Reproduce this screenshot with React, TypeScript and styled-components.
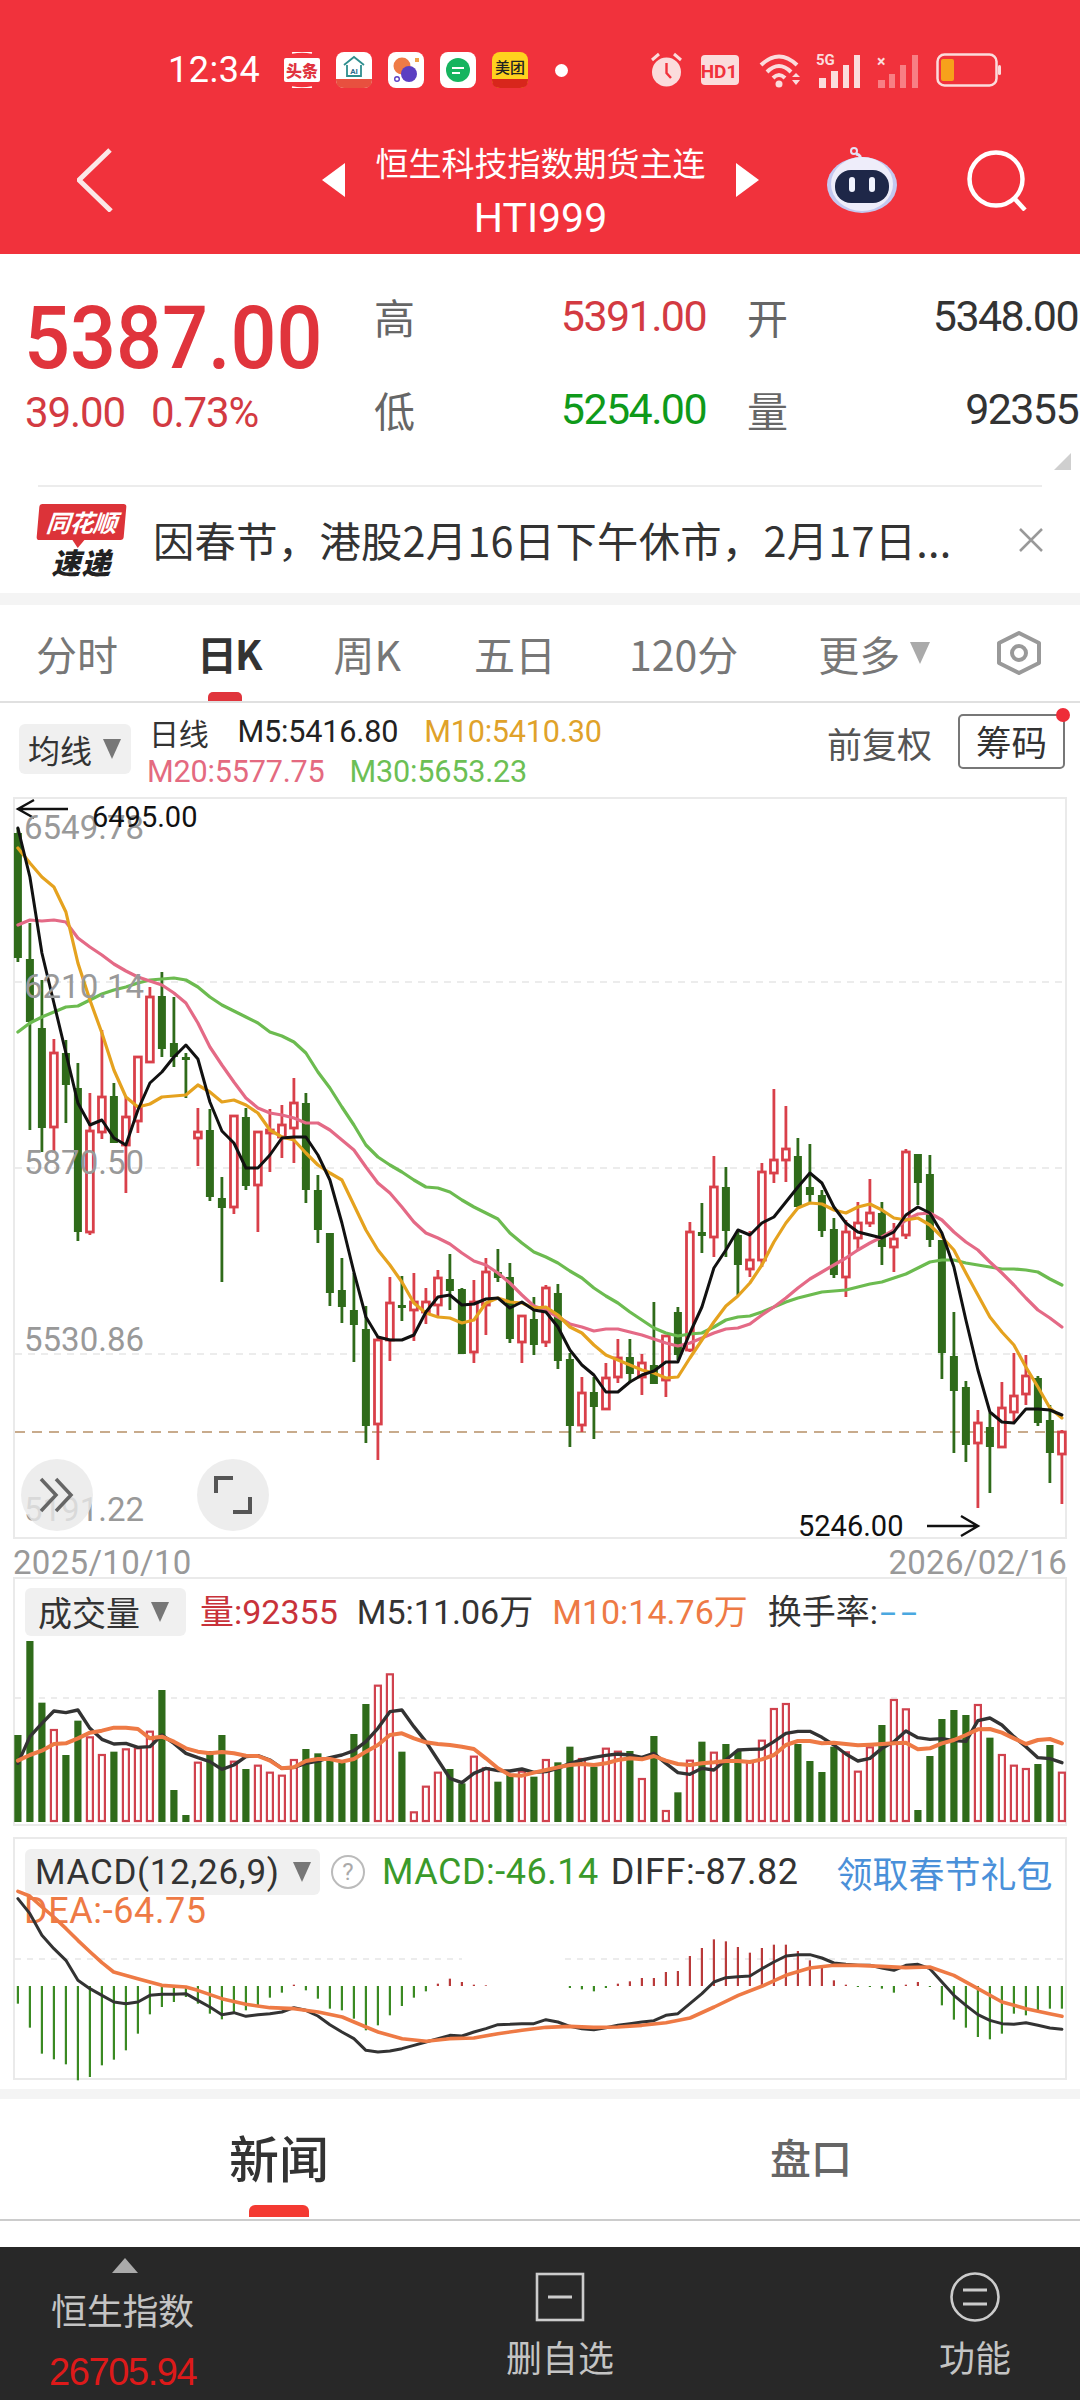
import styled, { createGlobalStyle } from "styled-components";

const CJK = `"Noto Sans CJK SC", sans-serif`;
const NUM = `Roboto, "Noto Sans CJK SC", sans-serif`;

const RED = "#d9404a";
const GREEN = "#2f6b1a";

const GlobalStyle = createGlobalStyle`
    html, body {
        margin: 0;
        padding: 0;
        background: #fff;
    }
    body {
        width: 1080px;
        font-family: ${NUM};
    }
    * {
        box-sizing: border-box;
    }
`;

// [high, bodyTop, bodyBottom, low, colour], all in page pixels
type Candle = [number, number, number, number, "r" | "g"];

const candles: Candle[] = [
    [828, 833, 958, 962, "g"], [923, 959, 1022, 1130, "g"], [980, 1028, 1128, 1152, "g"], [1039, 1053, 1127, 1153, "r"],
    [1040, 1053, 1085, 1123, "g"], [1063, 1088, 1232, 1241, "g"], [1093, 1131, 1232, 1235, "r"], [1030, 1097, 1132, 1139, "r"],
    [1083, 1096, 1143, 1143, "g"], [1097, 1117, 1145, 1193, "r"], [1057, 1057, 1121, 1133, "r"], [987, 997, 1062, 1063, "r"],
    [972, 996, 1049, 1057, "g"], [997, 1043, 1057, 1067, "g"], [1053, 1057, 1058, 1098, "g"], [1108, 1132, 1138, 1166, "r"],
    [1109, 1130, 1197, 1201, "g"], [1177, 1198, 1208, 1282, "g"], [1115, 1116, 1207, 1214, "r"], [1108, 1117, 1186, 1190, "g"],
    [1131, 1132, 1185, 1232, "r"], [1109, 1130, 1133, 1172, "r"], [1105, 1125, 1137, 1158, "r"], [1078, 1103, 1128, 1163, "r"],
    [1093, 1103, 1190, 1203, "g"], [1175, 1190, 1230, 1243, "g"], [1233, 1233, 1293, 1306, "g"], [1258, 1290, 1307, 1323, "g"],
    [1273, 1310, 1325, 1362, "g"], [1306, 1329, 1426, 1443, "g"], [1337, 1340, 1424, 1460, "r"], [1277, 1303, 1340, 1361, "r"],
    [1276, 1305, 1307, 1321, "g"], [1273, 1302, 1310, 1341, "r"], [1288, 1302, 1312, 1324, "r"], [1270, 1278, 1305, 1316, "r"],
    [1254, 1279, 1291, 1310, "g"], [1288, 1289, 1354, 1354, "g"], [1280, 1302, 1352, 1363, "r"], [1258, 1272, 1305, 1335, "r"],
    [1249, 1272, 1278, 1282, "g"], [1263, 1277, 1339, 1343, "g"], [1315, 1316, 1342, 1363, "r"], [1297, 1319, 1345, 1355, "g"],
    [1285, 1288, 1342, 1347, "r"], [1284, 1293, 1361, 1369, "g"], [1353, 1359, 1426, 1447, "g"], [1377, 1393, 1425, 1432, "r"],
    [1377, 1392, 1407, 1439, "g"], [1363, 1378, 1409, 1409, "r"], [1339, 1358, 1377, 1383, "r"], [1339, 1357, 1374, 1383, "g"],
    [1354, 1363, 1377, 1395, "r"], [1302, 1365, 1384, 1384, "g"], [1335, 1336, 1380, 1397, "r"], [1307, 1312, 1355, 1360, "g"],
    [1222, 1232, 1350, 1352, "r"], [1203, 1232, 1236, 1253, "g"], [1156, 1187, 1237, 1257, "r"], [1167, 1187, 1231, 1257, "g"],
    [1230, 1235, 1265, 1295, "g"], [1231, 1260, 1269, 1277, "r"], [1163, 1172, 1260, 1267, "r"], [1089, 1160, 1173, 1183, "r"],
    [1106, 1149, 1160, 1182, "r"], [1138, 1156, 1207, 1207, "g"], [1144, 1187, 1195, 1203, "g"], [1190, 1195, 1231, 1237, "g"],
    [1218, 1229, 1275, 1278, "g"], [1220, 1232, 1277, 1297, "r"], [1202, 1223, 1238, 1250, "r"], [1179, 1213, 1223, 1227, "r"],
    [1202, 1213, 1247, 1265, "g"], [1223, 1239, 1247, 1272, "r"], [1149, 1152, 1235, 1239, "r"], [1154, 1154, 1183, 1205, "g"],
    [1155, 1174, 1240, 1247, "g"], [1240, 1240, 1353, 1379, "g"], [1312, 1356, 1391, 1453, "g"], [1381, 1387, 1445, 1462, "g"],
    [1410, 1423, 1443, 1508, "r"], [1413, 1427, 1447, 1493, "g"], [1382, 1408, 1447, 1447, "r"], [1353, 1396, 1412, 1422, "r"],
    [1355, 1376, 1394, 1405, "r"], [1376, 1378, 1423, 1426, "g"], [1405, 1420, 1453, 1483, "g"], [1430, 1432, 1454, 1504, "r"],
];

const ma5 = [
    828, 877, 953, 1003, 1053, 1103, 1125, 1120, 1138, 1145, 1110, 1083, 1072, 1057, 1045, 1059, 1102, 1131, 1143, 1168, 1168, 1155,
    1138, 1137, 1137, 1155, 1180, 1223, 1272, 1317, 1337, 1340, 1340, 1335, 1312, 1297, 1295, 1305, 1304, 1299, 1298, 1308, 1302, 1310,
    1312, 1327, 1350, 1365, 1375, 1392, 1392, 1382, 1375, 1371, 1362, 1362, 1333, 1307, 1268, 1250, 1230, 1235, 1223, 1217, 1202, 1187,
    1173, 1183, 1207, 1223, 1232, 1235, 1238, 1232, 1215, 1207, 1213, 1233, 1267, 1320, 1370, 1412, 1422, 1423, 1409, 1409, 1410, 1415,
];
const ma10 = [
    848, 863, 877, 887, 912, 963, 1000, 1033, 1070, 1097, 1107, 1104, 1097, 1096, 1095, 1085, 1092, 1102, 1100, 1105, 1113, 1130, 1137,
    1140, 1153, 1165, 1173, 1180, 1205, 1230, 1250, 1265, 1282, 1303, 1313, 1317, 1318, 1323, 1320, 1303, 1298, 1302, 1303, 1308, 1307,
    1315, 1327, 1333, 1345, 1355, 1360, 1365, 1370, 1373, 1378, 1377, 1358, 1340, 1322, 1306, 1296, 1283, 1265, 1242, 1223, 1208, 1203,
    1204, 1210, 1213, 1207, 1204, 1210, 1218, 1220, 1218, 1225, 1237, 1250, 1273, 1295, 1317, 1332, 1345, 1367, 1387, 1408, 1418,
];
const ma20 = [
    925, 920, 921, 920, 922, 938, 947, 955, 964, 971, 977, 981, 985, 993, 1003, 1023, 1047, 1065, 1082, 1098, 1108, 1113, 1115, 1118,
    1123, 1123, 1130, 1140, 1150, 1167, 1183, 1193, 1207, 1222, 1233, 1238, 1244, 1253, 1261, 1265, 1273, 1283, 1295, 1306, 1310, 1317,
    1324, 1327, 1331, 1329, 1329, 1332, 1335, 1339, 1343, 1346, 1343, 1338, 1333, 1329, 1328, 1324, 1315, 1307, 1298, 1288, 1279, 1272,
    1265, 1258, 1250, 1243, 1237, 1230, 1220, 1214, 1213, 1220, 1232, 1242, 1250, 1262, 1273, 1285, 1298, 1310, 1318, 1327,
];
const ma30 = [
    1032, 1023, 1017, 1012, 1007, 1006, 1000, 994, 990, 987, 983, 980, 979, 978, 980, 987, 997, 1005, 1011, 1017, 1023, 1032, 1036,
    1042, 1053, 1072, 1088, 1107, 1125, 1145, 1157, 1165, 1172, 1180, 1187, 1188, 1192, 1200, 1207, 1213, 1219, 1233, 1243, 1252, 1257,
    1263, 1271, 1278, 1288, 1296, 1303, 1312, 1320, 1328, 1333, 1336, 1334, 1333, 1327, 1320, 1317, 1316, 1312, 1307, 1302, 1298, 1295,
    1292, 1291, 1290, 1287, 1284, 1282, 1278, 1274, 1268, 1262, 1260, 1260, 1263, 1265, 1267, 1269, 1269, 1270, 1272, 1279, 1285,
];

// volume panel values are y * 3 above 1630, as measured
const volumes = [
    315, 33, 218, 300, 375, 272, 322, 375, 365, 358, 355, 305, 180, 480, 555, 398, 363, 315, 395, 417, 407, 428, 437, 390, 357, 370,
    385, 398, 312, 222, 167, 133, 365, 547, 470, 428, 417, 460, 380, 415, 455, 432, 425, 440, 390, 397, 350, 387, 410, 356, 365, 363,
    447, 318, 543, 487, 392, 335, 368, 342, 363, 395, 332, 237, 222, 342, 393, 426, 350, 367, 425, 352, 285, 210, 238, 540, 378, 267,
    240, 255, 225, 323, 375, 407, 417, 402, 345, 428,
];
const volMa5 = [
    400, 320, 280, 243, 248, 240, 295, 328, 342, 340, 352, 350, 315, 340, 370, 383, 395, 418, 405, 380, 377, 390, 415, 412, 400, 393,
    383, 375, 362, 335, 295, 245, 240, 290, 335, 390, 445, 458, 430, 415, 422, 423, 417, 427, 425, 415, 400, 390, 382, 376, 372, 375,
    382, 370, 400, 428, 433, 415, 420, 390, 360, 358, 357, 335, 310, 304, 304, 322, 345, 372, 393, 385, 355, 335, 303, 323, 328, 326,
    332, 334, 272, 264, 285, 320, 350, 383, 386, 398,
];
const volMa10 = [
    392, 375, 362, 342, 340, 325, 308, 302, 293, 293, 297, 325, 320, 335, 355, 365, 370, 366, 370, 377, 378, 392, 415, 412, 393, 387,
    387, 395, 387, 365, 345, 315, 310, 325, 337, 342, 345, 350, 357, 385, 415, 435, 437, 428, 420, 412, 405, 402, 405, 400, 390, 385,
    388, 378, 392, 402, 405, 400, 397, 393, 393, 396, 388, 375, 345, 333, 333, 340, 338, 342, 346, 344, 342, 340, 338, 358, 355, 340,
    330, 315, 298, 297, 308, 325, 342, 330, 327, 340,
];

// macd panel values are y * 3 above 1830, zero line at 462
const macd = [
    515, 587, 665, 682, 697, 745, 735, 700, 683, 655, 605, 547, 525, 510, 495, 515, 545, 562, 540, 535, 520, 497, 482, 458, 475, 500,
    530, 535, 560, 595, 580, 550, 522, 497, 478, 455, 440, 450, 458, 460, 462, 462, 462, 462, 462, 462, 468, 472, 478, 468, 455, 448,
    438, 438, 420, 417, 372, 348, 322, 328, 345, 362, 348, 338, 338, 357, 385, 405, 445, 458, 465, 465, 470, 482, 458, 450, 465, 520,
    563, 587, 615, 622, 605, 545, 550, 540, 530, 530,
];
const diff = [
    200, 245, 310, 350, 385, 445, 470, 490, 510, 515, 510, 490, 487, 487, 485, 505, 525, 548, 542, 553, 548, 545, 540, 527, 535, 552,
    578, 600, 620, 655, 660, 657, 650, 640, 630, 620, 610, 612, 600, 590, 578, 577, 575, 575, 563, 570, 583, 590, 593, 587, 580, 575,
    570, 566, 550, 545, 515, 485, 450, 437, 434, 432, 410, 390, 372, 368, 368, 378, 393, 397, 400, 400, 408, 415, 400, 397, 410, 450,
    490, 520, 548, 565, 575, 577, 572, 580, 588, 592,
];
const dea: [number, number][] = [
    [26, 178], [43, 192], [61, 225], [78, 255], [96, 290], [113, 325], [131, 360], [148, 392], [165, 420], [200, 440], [235, 460],
    [270, 465], [287, 475], [322, 500], [357, 517], [392, 527], [427, 530], [462, 540], [497, 555], [514, 570], [549, 600], [584, 620],
    [619, 628], [653, 620], [688, 618], [723, 605], [758, 595], [793, 586], [827, 583], [862, 586], [897, 585], [932, 580], [967, 572],
    [1002, 558], [1037, 525], [1072, 490], [1107, 462], [1141, 430], [1176, 408], [1211, 400], [1245, 400], [1280, 403], [1315, 407],
    [1350, 405], [1385, 430], [1420, 470], [1455, 510], [1490, 530], [1524, 545], [1542, 553],
];

const cx = (i: number) => 17.9 + 12 * i;
const linePoints = (ys: number[], toY = (y: number) => y) => ys.map((y, i) => `${cx(i)},${toY(y)}`).join(" ");
const volY = (v: number) => 1630 + v / 3;
const macdY = (v: number) => 1830 + v / 3;

const Page = styled.div`
    width: 1080px;
    height: 2400px;
    display: flex;
    flex-direction: column;
    background: #fff;
    overflow: hidden;
`;

const Header = styled.header`
    height: 254px;
    background: #f1323c;
    color: #fff;
    display: flex;
    flex-direction: column;
    flex: none;
`;

const StatusBar = styled.div`
    height: 140px;
    padding-left: 168px;
    display: flex;
    align-items: center;
`;

const Clock = styled.span`
    width: 116px;
    font: 400 36px/1 ${NUM};
    letter-spacing: 0.5px;
`;

const AppIcons = styled.div`
    display: flex;
    gap: 16px;
`;

const Dot = styled.i`
    width: 13px;
    height: 13px;
    margin-left: 27px;
    border-radius: 50%;
    background: #fff;
`;

const StatusGlyph = styled.svg<{ $left: number }>`
    margin-left: ${(p) => p.$left}px;
    display: block;
`;

const NavBar = styled.div`
    height: 80px;
    padding-left: 77px;
    display: flex;
    align-items: center;
`;

const NavIcon = styled.svg<{ $left: number }>`
    margin-left: ${(p) => p.$left}px;
    flex: none;
    display: block;
`;

const NavTitle = styled.div`
    width: 329px;
    margin: 20px 0 0 31px;
    display: flex;
    flex-direction: column;
    align-items: center;
`;

const NavName = styled.div`
    height: 56px;
    font: 400 33px/56px ${CJK};
    white-space: nowrap;
`;

const NavCode = styled.div`
    height: 56px;
    font: 400 41px/56px ${NUM};
`;

const Quote = styled.section`
    position: relative;
    height: 231px;
    padding: 15px 0 0 27px;
    display: grid;
    grid-template-columns: 306px 332px 331px;
    grid-template-rows: 94px 93px;
    column-gap: 41px;
    flex: none;
`;

const PriceBlock = styled.div`
    grid-row: 1 / 3;
    padding-top: 19px;
    display: flex;
    flex-direction: column;
`;

const Price = styled.div`
    width: max-content;
    height: 100px;
    margin-left: -3px;
    font: 500 88px/100px ${NUM};
    color: #e0343c;
    transform: scaleX(0.92);
    transform-origin: left center;
    white-space: nowrap;
`;

const Change = styled.div`
    height: 50px;
    margin-left: -2px;
    display: flex;
    gap: 26px;
    font: 400 42px/50px ${NUM};
    letter-spacing: -1.1px;
    color: #d33a42;
    white-space: nowrap;
`;

const Stat = styled.div`
    display: flex;
    align-items: center;
    justify-content: space-between;
`;

const StatLabel = styled.span`
    font: 400 41px/1 ${CJK};
    color: #666;
`;

const StatValue = styled.span<{ $color: string }>`
    font: 400 43px/1 ${NUM};
    letter-spacing: -1.6px;
    color: ${(p) => p.$color};
`;

const QuoteCorner = styled.i`
    position: absolute;
    left: 1054px;
    top: 199px;
    width: 0;
    height: 0;
    border-left: 17px solid transparent;
    border-bottom: 17px solid #cfcfcf;
`;

const NewsDivider = styled.div`
    height: 2px;
    margin: 0 38px;
    background: #ececec;
    flex: none;
`;

const News = styled.section`
    height: 106px;
    padding-left: 38px;
    display: flex;
    align-items: center;
    flex: none;
`;

const NewsLogo = styled.div`
    width: 87px;
    height: 72px;
    display: flex;
    flex-direction: column;
    align-items: center;
    flex: none;
`;

const NewsBubble = styled.div`
    position: relative;
    width: 87px;
    height: 36px;
    background: #dc3339;
    border-radius: 3px;
    transform: skewX(-5deg);
    color: #fff;
    font: italic 700 24px/36px ${CJK};
    letter-spacing: -0.5px;
    text-align: center;
    white-space: nowrap;

    &::after {
        content: "";
        position: absolute;
        left: 36px;
        bottom: -8px;
        border-top: 8px solid #dc3339;
        border-left: 6px solid transparent;
        border-right: 6px solid transparent;
    }
`;

const NewsBrand = styled.div`
    margin-top: 6px;
    font: italic 900 29px/30px ${CJK};
    color: #222;
    letter-spacing: 1px;
`;

const NewsText = styled.div`
    width: 830px;
    margin-left: 28px;
    font: 400 41.3px/1.3 ${CJK};
    letter-spacing: 0.3px;
    color: #333;
    white-space: nowrap;
`;

const NewsClose = styled.svg`
    margin-left: 36px;
    flex: none;
`;

const Band = styled.div<{ $h: number; $top?: number }>`
    height: ${(p) => p.$h}px;
    margin-top: ${(p) => p.$top ?? 0}px;
    background: #f4f4f4;
    flex: none;
`;

const TabBar = styled.nav`
    height: 98px;
    padding: 0 0 0 36px;
    display: flex;
    align-items: center;
    border-bottom: 2px solid #e0e0e0;
    flex: none;
`;

const PeriodTab = styled.span<{ $left: number; $active?: boolean }>`
    position: relative;
    margin-left: ${(p) => p.$left}px;
    font: ${(p) => (p.$active ? "700 40px" : "400 41px")}/1 ${CJK};
    letter-spacing: ${(p) => (p.$active ? -2 : 0)}px;
    color: ${(p) => (p.$active ? "#333" : "#777")};
    white-space: nowrap;
`;

const PeriodMark = styled.i`
    position: absolute;
    left: 11px;
    top: 59px;
    width: 34px;
    height: 9px;
    border-radius: 5px 5px 0 0;
    background: #e0343c;
`;

const Caret = styled.i<{ $w: number; $h: number; $color: string; $left: number }>`
    width: 0;
    height: 0;
    margin-left: ${(p) => p.$left}px;
    border-left: ${(p) => p.$w / 2}px solid transparent;
    border-right: ${(p) => p.$w / 2}px solid transparent;
    border-top: ${(p) => p.$h}px solid ${(p) => p.$color};
    flex: none;
`;

const ChartLegend = styled.div`
    height: 94px;
    padding-left: 19px;
    display: flex;
    align-items: flex-start;
    flex: none;
`;

const Pill = styled.div<{ $w: number; $h: number; $pad: number; $size: number; $top?: number }>`
    width: ${(p) => p.$w}px;
    height: ${(p) => p.$h}px;
    margin-top: ${(p) => p.$top ?? 0}px;
    padding-left: ${(p) => p.$pad}px;
    border-radius: 6px;
    background: #f0f0f0;
    display: flex;
    align-items: center;
    font: 400 ${(p) => p.$size}px/1 ${CJK};
    color: #333;
    white-space: nowrap;
    flex: none;
`;

const MacdPill = styled(Pill)`
    font-family: ${NUM};
    letter-spacing: 0.7px;
`;

const LegendRows = styled.div`
    margin-left: 18px;
    padding-top: 11px;
    width: 650px;
    display: flex;
    flex-direction: column;
    gap: 4px;
`;

const LegendRow = styled.div`
    height: 36px;
    display: flex;
    align-items: center;
`;

const LegendItem = styled.span<{ $color: string; $left?: number }>`
    margin-left: ${(p) => p.$left ?? 0}px;
    font: 400 30.6px/1 ${NUM};
    letter-spacing: -0.2px;
    color: ${(p) => p.$color};
    white-space: nowrap;
`;

const LegendName = styled(LegendItem)`
    font: 400 30px/1 ${CJK};
`;

const AdjustLabel = styled.span`
    margin: 22px 0 0 28px;
    font: 400 35px/1 ${CJK};
    color: #555;
    white-space: nowrap;
`;

const ChipButton = styled.div`
    position: relative;
    width: 107px;
    height: 55px;
    margin: 11px 0 0 26px;
    border: 2px solid #777;
    border-radius: 5px;
    font: 400 35.5px/50px ${CJK};
    color: #333;
    text-align: center;
`;

const ChipDot = styled.i`
    position: absolute;
    right: -7px;
    top: -8px;
    width: 14px;
    height: 14px;
    border-radius: 50%;
    background: #ee2c38;
`;

const ChartFrame = styled.div`
    position: relative;
    width: 1054px;
    height: 742px;
    margin-left: 13px;
    border: 2px solid #eaeaea;
    flex: none;
`;

const ChartSvg = styled.svg`
    display: block;
    overflow: visible;
`;

const AxisLabel = styled.span<{ $center: number }>`
    position: absolute;
    left: 9px;
    top: ${(p) => p.$center - 799 - 20}px;
    font: 400 33px/40px ${NUM};
    color: #999;
`;

const PeakLabel = styled.span<{ $left: number; $center: number }>`
    position: absolute;
    left: ${(p) => p.$left}px;
    top: ${(p) => p.$center - 799 - 18}px;
    font: 400 29px/36px ${NUM};
    color: #111;
`;

const RoundButton = styled.div<{ $left: number }>`
    position: absolute;
    left: ${(p) => p.$left}px;
    top: 660px;
    width: 72px;
    height: 72px;
    border-radius: 50%;
    background: rgba(232, 232, 232, 0.8);
    display: flex;
    align-items: center;
    justify-content: center;
`;

const DateRow = styled.div`
    height: 38px;
    padding: 8px 13px 0;
    display: flex;
    align-items: center;
    justify-content: space-between;
    font: 400 33px/1 ${NUM};
    letter-spacing: 0.3px;
    color: #999;
    flex: none;
`;

const Panel = styled.div<{ $h: number; $top?: number }>`
    position: relative;
    width: 1054px;
    height: ${(p) => p.$h}px;
    margin: ${(p) => p.$top ?? 0}px 0 0 13px;
    border: 2px solid #eaeaea;
    flex: none;
`;

const PanelHead = styled.div`
    height: 61px;
    padding: 9px 0 0 10px;
    display: flex;
    align-items: flex-start;
`;

const MacdHead = styled(PanelHead)`
    height: 52px;
    padding-top: 10px;
`;

const PanelValue = styled.span<{ $color: string; $left: number }>`
    height: 48px;
    margin-left: ${(p) => p.$left}px;
    font: 400 34px/48px ${NUM}, ${CJK};
    color: ${(p) => p.$color};
    white-space: nowrap;
`;

const MacdValue = styled(PanelValue)`
    font-size: 36px;
    line-height: 46px;
    letter-spacing: 0.5px;
`;

const GiftLink = styled(PanelValue)`
    font: 400 36px/46px ${CJK};
`;

const NoRate = styled.span`
    display: inline-block;
    margin-left: 2px;
    color: #4aa8e0;
    letter-spacing: 3px;
    transform: scaleX(1.7);
    transform-origin: left center;
`;

const MacdLayer = styled.svg`
    position: absolute;
    left: 0;
    top: 0;
    overflow: visible;
`;

const DeaLabel = styled.div`
    margin-left: 9px;
    font: 400 36px/40px ${NUM};
    letter-spacing: 0.6px;
    color: #ee7a45;
`;

const HelpMark = styled.span`
    width: 34px;
    height: 34px;
    margin: 6px 0 0 11px;
    border: 2px solid #bbb;
    border-radius: 50%;
    font: 400 24px/30px ${NUM};
    color: #aaa;
    text-align: center;
    flex: none;
`;

const NewsTabs = styled.nav`
    height: 122px;
    border-bottom: 2px solid #ccc;
    display: flex;
    align-items: center;
    flex: none;
`;

const NewsTab = styled.span<{ $left: number; $active?: boolean }>`
    position: relative;
    margin-left: ${(p) => p.$left}px;
    margin-top: -6px;
    font: 500 ${(p) => (p.$active ? 50 : 41)}px/1 ${CJK};
    color: ${(p) => (p.$active ? "#333" : "#666")};
    white-space: nowrap;
`;

const NewsMark = styled.i`
    position: absolute;
    left: 20px;
    top: 74px;
    width: 60px;
    height: 12px;
    border-radius: 6px 6px 0 0;
    background: #f43a32;
`;

const Spacer = styled.div`
    flex: 1;
`;

const BottomBar = styled.footer`
    height: 153px;
    background: #282828;
    position: relative;
    display: flex;
    color: #c4c4c4;
    flex: none;
`;

const IndexCell = styled.div`
    width: 500px;
    padding: 11px 0 0 51px;
    display: flex;
    flex-direction: column;
    align-items: flex-start;
`;

const IndexArrow = styled.i`
    width: 0;
    height: 0;
    margin-left: 61px;
    border-left: 13px solid transparent;
    border-right: 13px solid transparent;
    border-bottom: 15px solid #aaa;
`;

const IndexName = styled.div`
    margin-top: 11px;
    font: 400 36px/50px ${CJK};
    letter-spacing: -0.3px;
    white-space: nowrap;
`;

const IndexValue = styled.div`
    margin-top: 15px;
    margin-left: -2px;
    font: 400 38px/46px "Liberation Sans", ${NUM};
    letter-spacing: -1.4px;
    color: #dd1a1a;
`;

const ActionCell = styled.div<{ $w: number; $left: number }>`
    width: ${(p) => p.$w}px;
    margin-left: ${(p) => p.$left}px;
    padding-top: 25px;
    display: flex;
    flex-direction: column;
    align-items: center;
    gap: 11px;
    font: 400 36px/46px ${CJK};
    white-space: nowrap;
`;

const ChartCandles = () => (
    <>
        {candles.map(([hi, top, bot, lo, c], i) => {
            const x = cx(i);
            const color = c === "r" ? RED : GREEN;
            return (
                <g key={i}>
                    <line x1={x} x2={x} y1={hi} y2={top} stroke={color} strokeWidth={2.8} />
                    <line x1={x} x2={x} y1={bot} y2={lo} stroke={color} strokeWidth={2.8} />
                    {c === "r" ? (
                        <rect x={x - 3.4} y={top} width={6.8} height={Math.max(bot - top, 3)} fill="#fff" stroke={color} strokeWidth={2.8} />
                    ) : (
                        <rect x={x - 4} y={top} width={8} height={Math.max(bot - top, 3)} fill={color} />
                    )}
                </g>
            );
        })}
    </>
);

const TrendLine = ({ points, color, width }: { points: string; color: string; width: number }) => (
    <polyline points={points} fill="none" stroke={color} strokeWidth={width} strokeLinejoin="round" strokeLinecap="round" />
);

const App = () => (
    <Page>
        <GlobalStyle />
        <Header>
            <StatusBar>
                <Clock>12:34</Clock>
                <AppIcons>
                    <svg width="36" height="36" viewBox="0 0 36 36">
                        <path d="M8 1 Q18 -1 28 1 M8 35 Q18 37 28 35" stroke="#fff" strokeWidth="1.6" fill="none" />
                        <rect x="0" y="6" width="36" height="24" fill="#fff" rx="2" />
                        <text x="18" y="25" textAnchor="middle" fontSize="16" fontWeight="900" fill="#e03440" fontFamily={CJK}>头条</text>
                    </svg>
                    <svg width="36" height="36" viewBox="0 0 36 36">
                        <rect width="36" height="36" rx="8" fill="#fff" />
                        <path d="M8 13 L18 5 L28 13 M11 13 V24 H25 V13" fill="none" stroke="#2e8e8e" strokeWidth="1.8" />
                        <text x="18" y="22" textAnchor="middle" fontSize="8" fontWeight="700" fill="#2e6e8e" fontFamily={NUM}>AI</text>
                        <path d="M0 27 H36 V28 Q36 36 28 36 H8 Q0 36 0 28 Z" fill="#e8503f" />
                    </svg>
                    <svg width="36" height="36" viewBox="0 0 36 36">
                        <rect width="36" height="36" rx="8" fill="#fff" />
                        <circle cx="14" cy="14" r="8.5" fill="#ef7b45" />
                        <circle cx="21" cy="22" r="8" fill="#5b3fc2" />
                        <rect x="27" y="6" width="4" height="4" fill="#f0a24a" />
                        <circle cx="9" cy="27" r="2.3" fill="none" stroke="#5b3fc2" strokeWidth="1.4" />
                    </svg>
                    <svg width="36" height="36" viewBox="0 0 36 36">
                        <rect width="36" height="36" rx="8" fill="#fff" />
                        <circle cx="18" cy="18" r="12" fill="#16b45f" />
                        <path d="M12 16 H24 M12 21 H20" stroke="#fff" strokeWidth="2.2" />
                    </svg>
                    <svg width="36" height="36" viewBox="0 0 36 36">
                        <rect width="36" height="36" rx="8" fill="#ffd21e" />
                        <path d="M0 27 H36 V28 Q36 36 28 36 H8 Q0 36 0 28 Z" fill="#d8261c" />
                        <text x="18" y="21" textAnchor="middle" fontSize="15" fontWeight="500" fill="#222" fontFamily={CJK}>美团</text>
                    </svg>
                </AppIcons>
                <Dot />
                <StatusGlyph $left={82} width="33" height="36" viewBox="0 0 33 36">
                    <circle cx="16.5" cy="20" r="14.5" fill="#fbdcdc" />
                    <path d="M16.5 11 V21 L21 26" fill="none" stroke="#f1323c" strokeWidth="2.4" />
                    <path d="M2 8 L9 2 M31 8 L24 2" stroke="#fbdcdc" strokeWidth="3" />
                </StatusGlyph>
                <StatusGlyph $left={18} width="38" height="30" viewBox="0 0 38 30">
                    <rect width="38" height="30" rx="4" fill="#fbdcdc" />
                    <text x="18" y="23" textAnchor="middle" fontSize="19" fontWeight="700" fill="#f1323c" fontFamily={NUM}>HD1</text>
                </StatusGlyph>
                <StatusGlyph $left={20} width="42" height="36" viewBox="0 0 42 36">
                    <path d="M2 13 Q20 -4 38 13 M8 20 Q20 8 32 20 M14 26 Q20 20 26 26" fill="none" stroke="#fbdcdc" strokeWidth="4" />
                    <circle cx="20" cy="32" r="3.5" fill="#fbdcdc" />
                    <path d="M33 25 L37 21 L41 25 Z M33 28 H41 L37 33 Z" fill="#fbdcdc" />
                </StatusGlyph>
                <StatusGlyph $left={15} width="45" height="36" viewBox="0 0 45 36">
                    <text x="0" y="13" fontSize="15" fontWeight="700" fill="#fbdcdc" fontFamily={NUM}>5G</text>
                    <path d="M3 26 H10 V36 H3 Z M15 19 H22 V36 H15 Z M27 13 H33 V36 H27 Z M38 3 H44 V36 H38 Z" fill="#fbdcdc" />
                </StatusGlyph>
                <StatusGlyph $left={16} width="43" height="36" viewBox="0 0 43 36">
                    <text x="0" y="15" fontSize="16" fontWeight="700" fill="#fbdcdc" fontFamily={NUM}>×</text>
                    <path d="M1 28 H8 V36 H1 Z M12 22 H18 V36 H12 Z M23 13 H29 V36 H23 Z M35 3 H41 V36 H35 Z" fill="#f87f84" />
                </StatusGlyph>
                <StatusGlyph $left={16} width="66" height="34" viewBox="0 0 66 34">
                    <rect x="1.5" y="1.5" width="59" height="31" rx="7" fill="none" stroke="#fbdcdc" strokeWidth="2.5" />
                    <rect x="5" y="6" width="13" height="22" rx="2" fill="#f7a11b" />
                    <rect x="62" y="12" width="3" height="10" rx="1.5" fill="#fbdcdc" />
                </StatusGlyph>
            </StatusBar>
            <NavBar>
                <NavIcon $left={0} width="36" height="64" viewBox="0 0 36 64">
                    <path d="M33 2 L2 32 L34 63" fill="none" stroke="#fbe8e8" strokeWidth="5" />
                </NavIcon>
                <NavIcon $left={209} width="23" height="34" viewBox="0 0 23 34">
                    <path d="M23 0 V34 L0 17 Z" fill="#fff" />
                </NavIcon>
                <NavTitle>
                    <NavName>恒生科技指数期货主连</NavName>
                    <NavCode>HTI999</NavCode>
                </NavTitle>
                <NavIcon $left={31} width="23" height="34" viewBox="0 0 23 34">
                    <path d="M0 0 V34 L23 17 Z" fill="#fff" />
                </NavIcon>
                <NavIcon $left={67} width="72" height="66" viewBox="0 0 72 66">
                    <circle cx="28" cy="4" r="3" fill="none" stroke="#e4e2f4" strokeWidth="2" />
                    <path d="M30 7 Q36 8 34 14" fill="none" stroke="#e4e2f4" strokeWidth="3" />
                    <ellipse cx="36" cy="38" rx="35" ry="28" fill="#c3c8f0" />
                    <ellipse cx="36" cy="37" rx="31" ry="27" fill="#eeedfa" />
                    <rect x="9" y="23" width="54" height="33" rx="16" fill="#1e2748" />
                    <rect x="23" y="30" width="6" height="15" rx="3" fill="#f1f3ff" />
                    <rect x="43" y="30" width="6" height="15" rx="3" fill="#f1f3ff" />
                </NavIcon>
                <NavIcon $left={69} width="60" height="62" viewBox="0 0 60 62">
                    <circle cx="29" cy="30" r="26.5" fill="none" stroke="#fff" strokeWidth="4.5" />
                    <path d="M47 49 L58 61" stroke="#fff" strokeWidth="4.5" />
                </NavIcon>
            </NavBar>
        </Header>

        <Quote>
            <PriceBlock>
                <Price>5387.00</Price>
                <Change>
                    <span>39.00</span>
                    <span>0.73%</span>
                </Change>
            </PriceBlock>
            <Stat>
                <StatLabel>高</StatLabel>
                <StatValue $color="#d33a42">5391.00</StatValue>
            </Stat>
            <Stat>
                <StatLabel>开</StatLabel>
                <StatValue $color="#333">5348.00</StatValue>
            </Stat>
            <Stat>
                <StatLabel>低</StatLabel>
                <StatValue $color="#0f9a1a">5254.00</StatValue>
            </Stat>
            <Stat>
                <StatLabel>量</StatLabel>
                <StatValue $color="#333">92355</StatValue>
            </Stat>
            <QuoteCorner />
        </Quote>
        <NewsDivider />
        <News>
            <NewsLogo>
                <NewsBubble>同花顺</NewsBubble>
                <NewsBrand>速递</NewsBrand>
            </NewsLogo>
            <NewsText>因春节，港股2月16日下午休市，2月17日...</NewsText>
            <NewsClose width="24" height="24" viewBox="0 0 24 24">
                <path d="M1 1 L23 23 M23 1 L1 23" stroke="#999" strokeWidth="2.5" />
            </NewsClose>
        </News>
        <Band $h={12} />

        <TabBar>
            <PeriodTab $left={0}>分时</PeriodTab>
            <PeriodTab $left={79} $active>
                日K
                <PeriodMark />
            </PeriodTab>
            <PeriodTab $left={73}>周K</PeriodTab>
            <PeriodTab $left={73}>五日</PeriodTab>
            <PeriodTab $left={73}>120分</PeriodTab>
            <PeriodTab $left={80}>更多</PeriodTab>
            <Caret $w={21} $h={22} $color="#aaa" $left={10} />
            <NavIcon $left={66} width="46" height="44" viewBox="0 0 46 44">
                <path d="M23 2 L43 12 V32 L23 42 L3 32 V12 Z" fill="none" stroke="#999" strokeWidth="4" strokeLinejoin="round" />
                <circle cx="23" cy="22" r="7" fill="none" stroke="#999" strokeWidth="4" />
            </NavIcon>
        </TabBar>

        <ChartLegend>
            <Pill $w={112} $h={50} $pad={9} $size={32} $top={21}>
                均线
                <Caret $w={18} $h={20} $color="#777" $left={11} />
            </Pill>
            <LegendRows>
                <LegendRow>
                    <LegendName $color="#333">日线</LegendName>
                    <LegendItem $color="#222" $left={29}>M5:5416.80</LegendItem>
                    <LegendItem $color="#e0a22a" $left={26}>M10:5410.30</LegendItem>
                </LegendRow>
                <LegendRow>
                    <LegendItem $color="#e46a80" $left={-2}>M20:5577.75</LegendItem>
                    <LegendItem $color="#6cbf55" $left={25}>M30:5653.23</LegendItem>
                </LegendRow>
            </LegendRows>
            <AdjustLabel>前复权</AdjustLabel>
            <ChipButton>
                筹码
                <ChipDot />
            </ChipButton>
        </ChartLegend>

        <ChartFrame>
            <ChartSvg width="1050" height="738" viewBox="15 799 1050 738">
                {[982, 1168, 1354].map((y) => (
                    <line key={y} x1="15" x2="1065" y1={y} y2={y} stroke="#e6e6e6" strokeWidth="1.5" strokeDasharray="7 6" />
                ))}
                <line x1="15" x2="1065" y1="1432" y2="1432" stroke="#c8ab8c" strokeWidth="2" strokeDasharray="10 7" />
                <ChartCandles />
                <TrendLine points={linePoints(ma30)} color="#6cbb50" width={3.2} />
                <TrendLine points={linePoints(ma20)} color="#e46a86" width={3.2} />
                <TrendLine points={linePoints(ma10)} color="#e5a21f" width={3.2} />
                <TrendLine points={linePoints(ma5)} color="#111" width={3} />
                <path d="M18 809 H68 M34 800 L18 809 L34 818" fill="none" stroke="#111" strokeWidth="2.4" />
                <path d="M927 1526 H978 M961 1516 L978 1526 L961 1536" fill="none" stroke="#111" strokeWidth="2.4" />
            </ChartSvg>
            <AxisLabel $center={828}>6549.78</AxisLabel>
            <AxisLabel $center={987}>6210.14</AxisLabel>
            <AxisLabel $center={1163}>5870.50</AxisLabel>
            <AxisLabel $center={1340}>5530.86</AxisLabel>
            <AxisLabel $center={1510}>5191.22</AxisLabel>
            <PeakLabel $left={77} $center={817}>6495.00</PeakLabel>
            <PeakLabel $left={783} $center={1526}>5246.00</PeakLabel>
            <RoundButton $left={6}>
                <svg width="36" height="36" viewBox="0 0 36 36">
                    <path d="M2 2 L17 18 L2 34 M17 2 L32 18 L17 34" fill="none" stroke="#666" strokeWidth="3.5" />
                </svg>
            </RoundButton>
            <RoundButton $left={182}>
                <svg width="38" height="38" viewBox="0 0 38 38">
                    <path d="M2 17 V2 H19 M36 21 V36 H19" fill="none" stroke="#555" strokeWidth="4" />
                </svg>
            </RoundButton>
        </ChartFrame>

        <DateRow>
            <span>2025/10/10</span>
            <span>2026/02/16</span>
        </DateRow>

        <Panel $h={249}>
            <PanelHead>
                <Pill $w={161} $h={48} $pad={13} $size={34}>
                    成交量
                    <Caret $w={18} $h={20} $color="#777" $left={11} />
                </Pill>
                <PanelValue $color="#c8323a" $left={14}>量:92355</PanelValue>
                <PanelValue $color="#333" $left={19}>M5:11.06万</PanelValue>
                <PanelValue $color="#ee7a45" $left={19}>M10:14.76万</PanelValue>
                <PanelValue $color="#333" $left={20}>
                    换手率:<NoRate>--</NoRate>
                </PanelValue>
            </PanelHead>
            <ChartSvg width="1050" height="184" viewBox="15 1640 1050 184">
                <line x1="15" x2="1065" y1="1698" y2="1698" stroke="#e6e6e6" strokeWidth="1.5" strokeDasharray="6 6" />
                {volumes.map((v, i) => {
                    const top = volY(v);
                    return candles[i][4] === "r" ? (
                        <rect key={i} x={cx(i) - 3} y={top} width={6} height={1821 - top} fill="#fff" stroke="#d0424e" strokeWidth="2.2" />
                    ) : (
                        <rect key={i} x={cx(i) - 3.6} y={top} width={7.2} height={1822 - top} fill={GREEN} />
                    );
                })}
                <TrendLine points={linePoints(volMa5, volY)} color="#333" width={3.4} />
                <TrendLine points={linePoints(volMa10, volY)} color="#ee7a45" width={4} />
            </ChartSvg>
        </Panel>

        <Panel $h={243} $top={11}>
            <MacdHead>
                <MacdPill $w={295} $h={46} $pad={10} $size={35}>
                    MACD(12,26,9)
                    <Caret $w={18} $h={20} $color="#777" $left={13} />
                </MacdPill>
                <HelpMark>?</HelpMark>
                <MacdValue $color="#3a9a2a" $left={17}>MACD:-46.14</MacdValue>
                <MacdValue $color="#333" $left={12}>DIFF:-87.82</MacdValue>
                <GiftLink $color="#4a90d9" $left={38}>领取春节礼包</GiftLink>
            </MacdHead>
            <DeaLabel>DEA:-64.75</DeaLabel>
            <MacdLayer width="1050" height="239" viewBox="15 1837 1050 239">
                <line x1="15" x2="462" y1="1957" y2="1957" stroke="#e6e6e6" strokeWidth="1.5" strokeDasharray="6 6" />
                <line x1="565" x2="1065" y1="1957" y2="1957" stroke="#e6e6e6" strokeWidth="1.5" strokeDasharray="6 6" />
                {macd.map((v, i) => (
                    <line key={i} x1={cx(i)} x2={cx(i)} y1={macdY(462)} y2={macdY(v)} stroke={v > 462 ? "#3a8a22" : "#b93a3a"} strokeWidth="2.2" />
                ))}
                <TrendLine points={linePoints(diff, macdY)} color="#333" width={3} />
                <TrendLine points={dea.map(([z, v]) => `${z / 1.452},${macdY(v)}`).join(" ")} color="#ee7a45" width={3.6} />
            </MacdLayer>
        </Panel>

        <Band $h={10} $top={9} />

        <NewsTabs>
            <NewsTab $left={229} $active>
                新闻
                <NewsMark />
            </NewsTab>
            <NewsTab $left={441}>盘口</NewsTab>
        </NewsTabs>
        <Spacer />

        <BottomBar>
            <IndexCell>
                <IndexArrow />
                <IndexName>恒生指数</IndexName>
                <IndexValue>26705.94</IndexValue>
            </IndexCell>
            <ActionCell $w={120} $left={0}>
                <svg width="50" height="50" viewBox="0 0 50 50">
                    <rect x="2" y="2" width="46" height="46" fill="none" stroke="#ccc" strokeWidth="2.6" />
                    <path d="M13 25 H37" stroke="#ccc" strokeWidth="3" />
                </svg>
                删自选
            </ActionCell>
            <ActionCell $w={80} $left={315}>
                <svg width="50" height="50" viewBox="0 0 50 50">
                    <circle cx="25" cy="25" r="23.5" fill="none" stroke="#ccc" strokeWidth="2.6" />
                    <path d="M13 18 H37 M13 32 H37" stroke="#ccc" strokeWidth="3" />
                </svg>
                功能
            </ActionCell>
        </BottomBar>
    </Page>
);

export default App;
